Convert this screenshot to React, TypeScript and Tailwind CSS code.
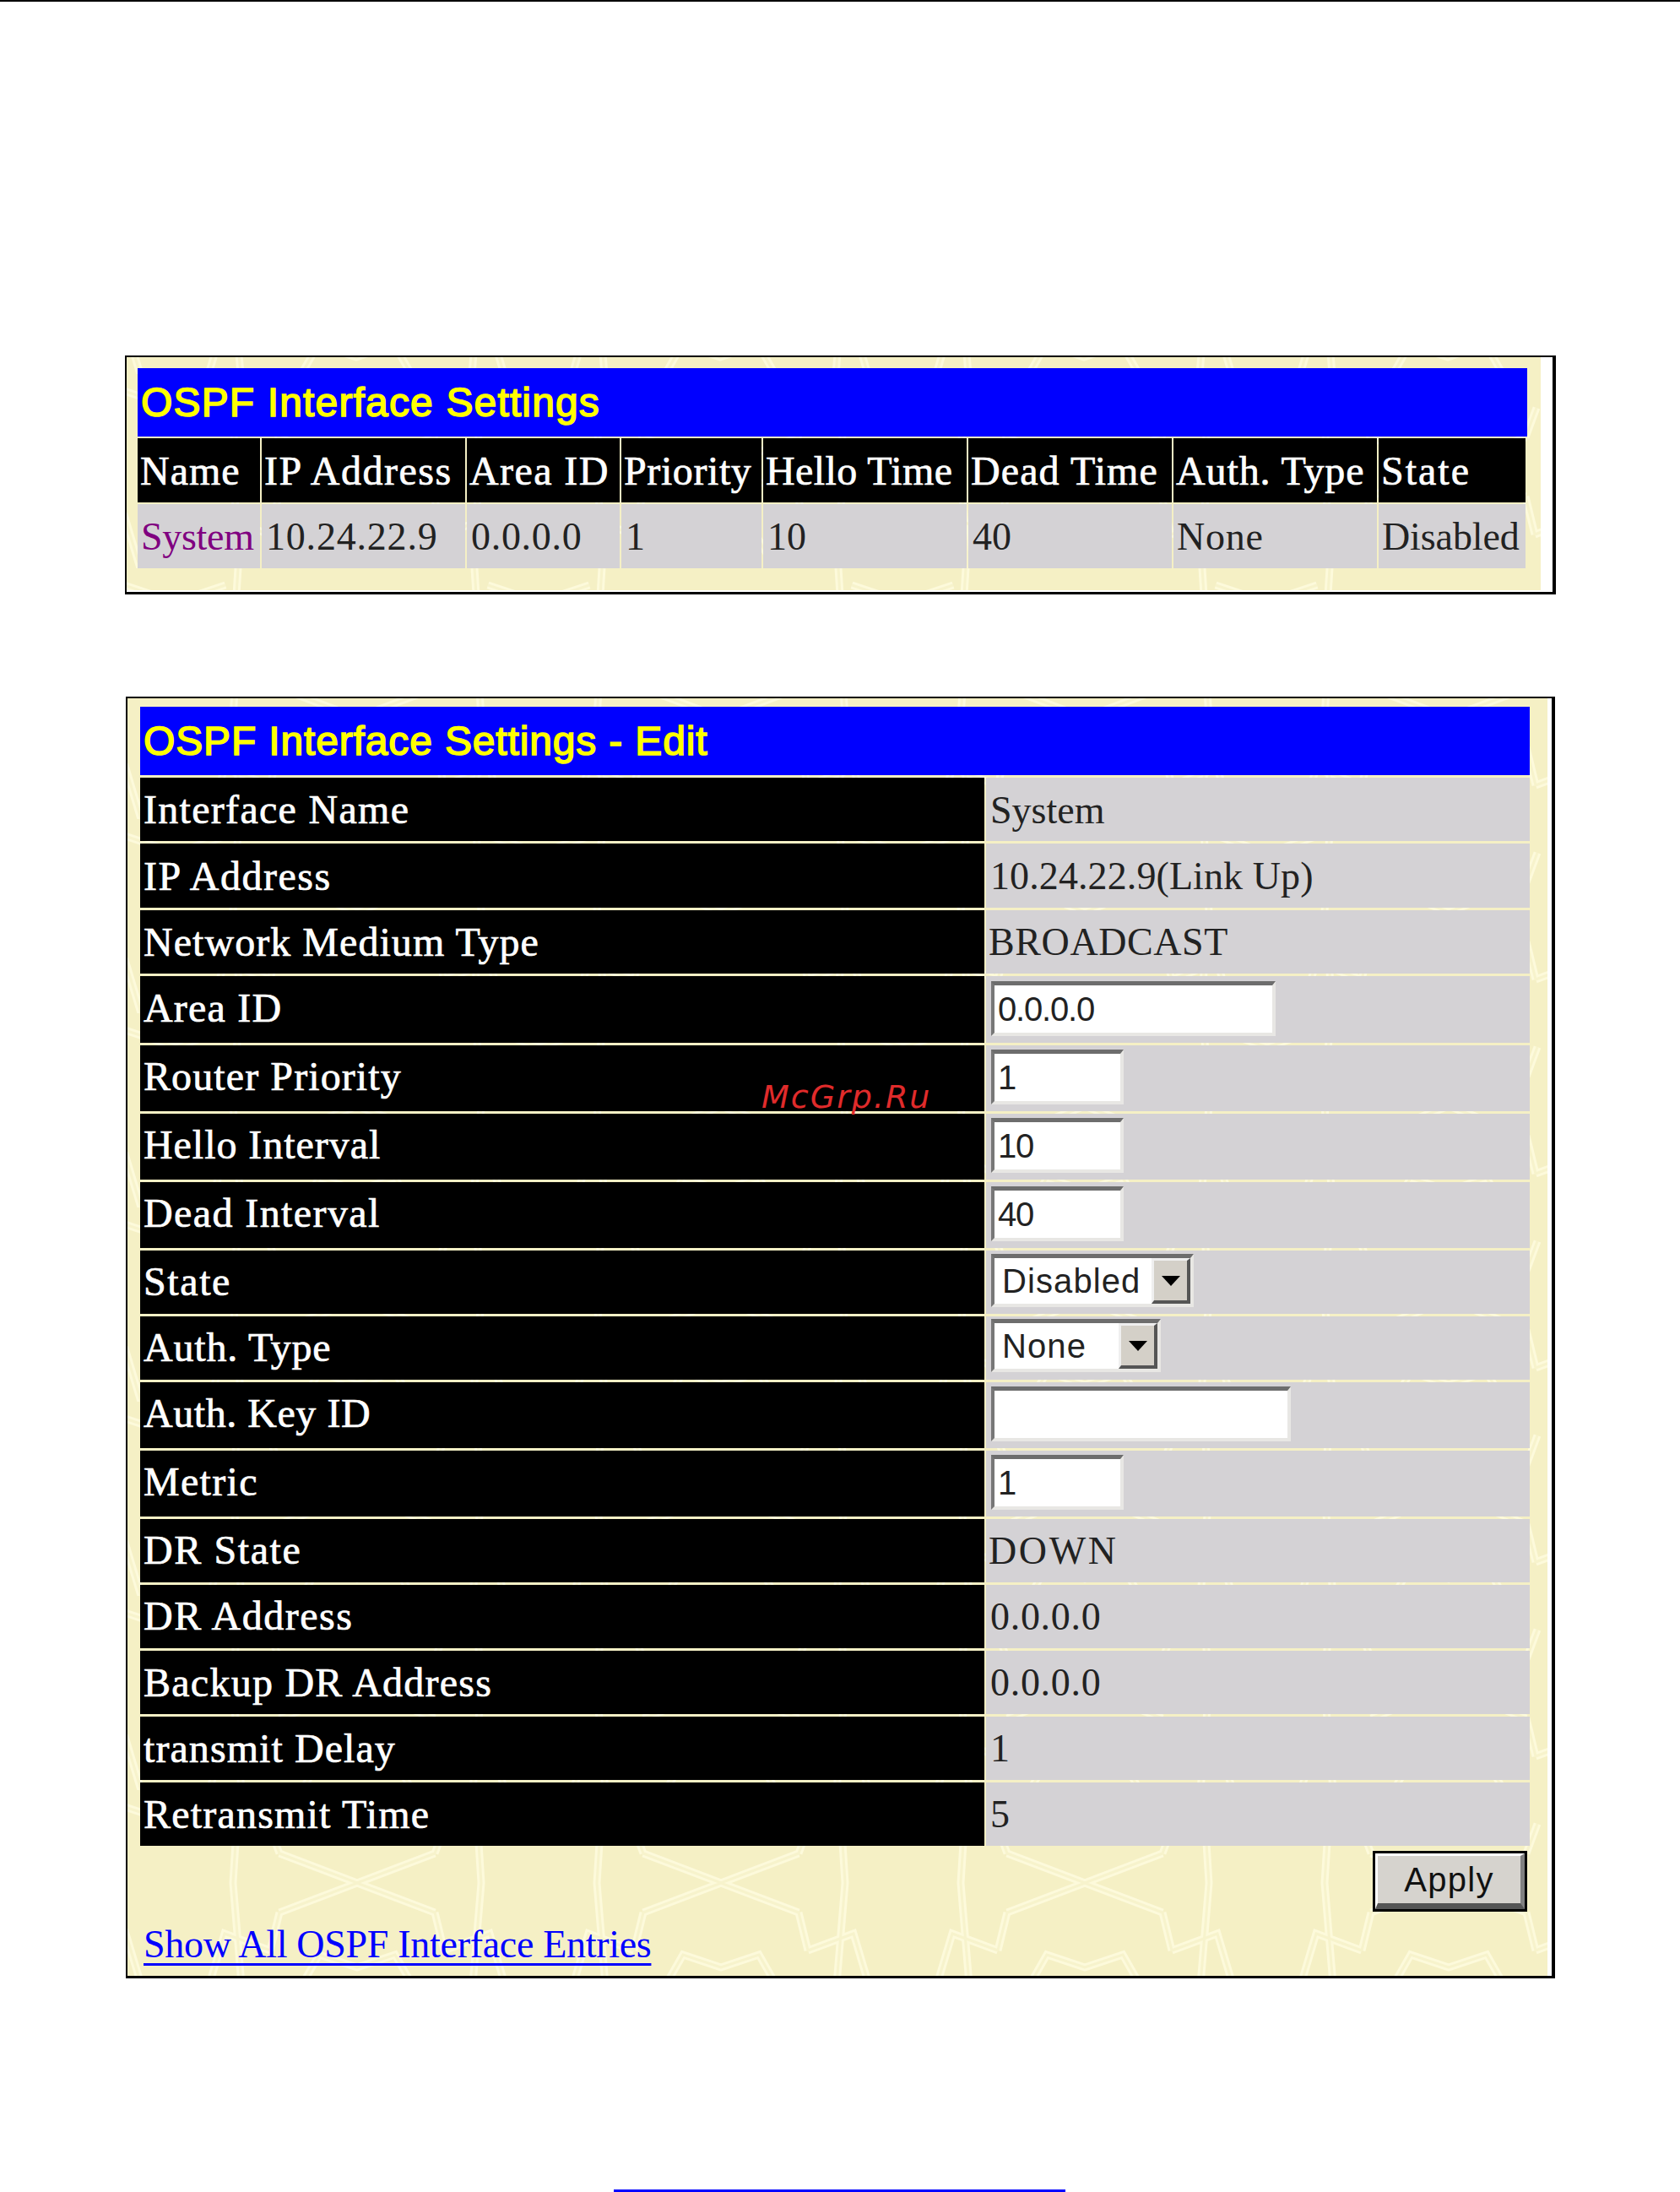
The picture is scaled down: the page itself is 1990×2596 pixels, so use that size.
import React from "react";

const serif = "font-['Liberation_Serif',serif]";
const stroke = "[-webkit-text-stroke:0.7px_#ffffff]";
const titleCls =
  "h-[81px] w-[1646px] bg-[#0000ff] flex items-center font-['Liberation_Sans',sans-serif] text-[48px] text-[#ffff00] [-webkit-text-stroke:1.6px_#ffff00]";

function PatternBg({ id, x, y }: { id: string; x: number; y: number }) {
  const d =
    "M123 75 L215 110 L307 75 M123 145 L215 110 L307 145 M123 75 L110 40 M307 75 L320 40 M123 145 L112 190 M307 145 L318 190 " +
    "M75 0 L68 110 L78 230 M355 0 L362 110 L352 230 " +
    "M40 230 L58 170 L112 190 M390 230 L372 170 L318 190 M150 230 L170 195 L215 210 L260 195 L280 230 M0 40 L60 20 M431 40 L371 20";
  return (
    <svg className="absolute inset-0 h-full w-full" aria-hidden="true">
      <defs>
        <pattern id={id} width="431" height="230" patternUnits="userSpaceOnUse" x={x} y={y}>
          <rect width="431" height="230" fill="#f5f0c5" />
          <path d={d} fill="none" stroke="#fdfadb" strokeWidth="9" />
          <path d={d} fill="none" stroke="#f7f3cc" strokeWidth="3" />
        </pattern>
      </defs>
      <rect width="100%" height="100%" fill={`url(#${id})`} />
    </svg>
  );
}

const headers = [
  { t: "Name", c: "tracking-[1px]" },
  { t: "IP Address", c: "tracking-[1.5px]" },
  { t: "Area ID", c: "tracking-[1.4px]" },
  { t: "Priority", c: "tracking-[0.6px]" },
  { t: "Hello Time", c: "tracking-[0.4px]" },
  { t: "Dead Time", c: "tracking-[1.1px]" },
  { t: "Auth. Type", c: "tracking-[0.9px]" },
  { t: "State", c: "tracking-[2px]" },
];
const values = [
  { t: "System", c: "pl-[4px] text-[#800080] tracking-[-0.3px]" },
  { t: "10.24.22.9", c: "pl-[5px] text-[#222222] tracking-[0.8px]" },
  { t: "0.0.0.0", c: "pl-[5px] text-[#222222] tracking-[0.7px]" },
  { t: "1", c: "pl-[5px] text-[#222222]" },
  { t: "10", c: "pl-[5px] text-[#222222]" },
  { t: "40", c: "pl-[5px] text-[#222222]" },
  { t: "None", c: "pl-[4px] text-[#222222] tracking-[0.8px]" },
  { t: "Disabled", c: "pl-[4px] text-[#222222] tracking-[-0.1px]" },
];

function SunkenInput({ value, width }: { value: string; width: string }) {
  return (
    <div
      className={`${width} mb-[3px] h-[65px] border-t-[5px] border-l-[4px] border-r-[4px] border-b-[4px] border-t-[#6d6d6d] border-l-[#777777] border-r-[#e8e7e4] border-b-[#e8e7e4] bg-white flex items-center pl-[4px] font-['Liberation_Sans',sans-serif] text-[40px] tracking-[-1.2px] leading-none text-[#222222]`}
    >
      {value}
    </div>
  );
}

function FakeSelect({ value, width, mb }: { value: string; width: string; mb: string }) {
  return (
    <div
      className={`${width} ${mb} h-[63px] border-t-[5px] border-l-[4px] border-r-[4px] border-b-[4px] border-t-[#6d6d6d] border-l-[#777777] border-r-[#e8e7e4] border-b-[#e8e7e4] bg-white flex items-stretch font-['Liberation_Sans',sans-serif] text-[40px] tracking-[1.1px] leading-none text-[#222222]`}
    >
      <div className="flex-1 flex items-center pl-[9px]">{value}</div>
      <div className="w-[46px] bg-[#d4d0c8] border-t-[3px] border-l-[3px] border-r-[4px] border-b-[4px] border-t-[#efefef] border-l-[#efefef] border-r-[#555555] border-b-[#555555] flex items-center justify-center">
        <svg width="22" height="12" viewBox="0 0 22 12" aria-hidden="true"><path d="M0 0H22L11 12Z" fill="#000" /></svg>
      </div>
    </div>
  );
}

type Row = { label: string; h: string; ls: string; pb: string; vc?: string; content: React.ReactNode };
const rows: Row[] = [
  { label: "Interface Name", h: "h-[75px]", ls: "tracking-[1.3px]", pb: "pt-[1px]", vc: "pl-[5px] pt-[1px]", content: "System" },
  { label: "IP Address", h: "h-[76px]", ls: "tracking-[1.5px]", pb: "pt-[1px]", vc: "pl-[5px] pt-[1px] tracking-[0.1px]", content: "10.24.22.9(Link Up)" },
  { label: "Network Medium Type", h: "h-[75px]", ls: "tracking-[1.05px]", pb: "pt-[1px]", vc: "pl-[3px] tracking-[0.6px]", content: "BROADCAST" },
  { label: "Area ID", h: "h-[79px]", ls: "tracking-[1.2px]", pb: "pb-[3px]", content: <SunkenInput value="0.0.0.0" width="w-[337px]" /> },
  { label: "Router Priority", h: "h-[78px]", ls: "tracking-[1.1px]", pb: "pb-[4px]", content: <SunkenInput value="1" width="w-[157px]" /> },
  { label: "Hello Interval", h: "h-[78px]", ls: "tracking-[0.95px]", pb: "pb-[4px]", content: <SunkenInput value="10" width="w-[157px]" /> },
  { label: "Dead Interval", h: "h-[78px]", ls: "tracking-[1.4px]", pb: "pb-[4px]", content: <SunkenInput value="40" width="w-[157px]" /> },
  { label: "State", h: "h-[75px]", ls: "tracking-[1.6px]", pb: "pb-[1px]", content: <FakeSelect value="Disabled" width="w-[240px]" mb="mb-[4px]" /> },
  { label: "Auth. Type", h: "h-[75px]", ls: "tracking-[0.8px]", pb: "pb-[1px]", content: <FakeSelect value="None" width="w-[201px]" mb="mb-[6px]" /> },
  { label: "Auth. Key ID", h: "h-[78px]", ls: "tracking-[0.55px]", pb: "pb-[4px]", content: <SunkenInput value="" width="w-[355px]" /> },
  { label: "Metric", h: "h-[78px]", ls: "tracking-[1.3px]", pb: "pb-[4px]", content: <SunkenInput value="1" width="w-[157px]" /> },
  { label: "DR State", h: "h-[75px]", ls: "tracking-[1.6px]", pb: "pb-[1px]", vc: "pl-[3px] tracking-[2.6px]", content: "DOWN" },
  { label: "DR Address", h: "h-[75px]", ls: "tracking-[1.5px]", pb: "pb-[1px]", vc: "pl-[5px] tracking-[0.7px]", content: "0.0.0.0" },
  { label: "Backup DR Address", h: "h-[75px]", ls: "tracking-[1.25px]", pb: "pt-[1px]", vc: "pl-[5px] tracking-[0.7px]", content: "0.0.0.0" },
  { label: "transmit Delay", h: "h-[75px]", ls: "tracking-[1.07px]", pb: "pt-[1px]", vc: "pl-[5px]", content: "1" },
  { label: "Retransmit Time", h: "h-[75px]", ls: "tracking-[1.2px]", pb: "pt-[1px]", vc: "pl-[5px]", content: "5" },
];

export default function App() {
  return (
    <div className={`relative w-[1990px] h-[2596px] bg-white overflow-hidden ${serif}`}>
      <div className="h-[2px] w-full bg-black" />
      <div className="pt-[419px] pl-[148px]">
        <section className="w-[1695px] h-[283px] border-l-2 border-t-2 border-r-4 border-b-[3px] border-black bg-white">
          <div className="relative w-[1675px] h-[276px] overflow-hidden">
            <PatternBg id="p1" x={57} y={20} />
            <div className="relative pl-[13px] pt-[13px]">
              <div className={`${titleCls} pl-[4px] tracking-[1.15px]`}>OSPF Interface Settings</div>
              <div className="mt-[2px] grid gap-x-[2px] gap-y-[2px] grid-cols-[145px_241px_181px_166px_241px_241px_241px_174px] grid-rows-[76px_76px] w-[1646px] text-[46px]">
                {headers.map((h) => (
                  <div key={h.t} className={`bg-black text-white text-[48px] flex items-center pl-[3px] pt-[2px] whitespace-nowrap ${stroke} ${h.c}`}>{h.t}</div>
                ))}
                {values.map((v) => (
                  <div key={v.t} className={`bg-[#d4d2d5] flex items-center whitespace-nowrap ${v.c}`}>{v.t}</div>
                ))}
              </div>
            </div>
          </div>
        </section>
      </div>

      <div className="pt-[121px] pl-[149px]">
        <section className="w-[1693px] h-[1518px] border-l-2 border-t-2 border-r-4 border-b-[3px] border-black bg-white">
          <div className="relative w-[1682px] h-[1513px] overflow-hidden">
            <PatternBg id="p2" x={57} y={143} />
            <div className="relative pl-[15px] pt-[10px]">
              <div className={`${titleCls} pl-[4px] tracking-[0.85px]`}>OSPF Interface Settings - Edit</div>
              <div className="mt-[3px] flex flex-col gap-[3px] w-[1646px] text-[46px]">
                {rows.map((r) => (
                  <div key={r.label} className={`flex gap-[2px] ${r.h}`}>
                    <div className={`w-[1000px] bg-black text-white text-[48px] flex items-center pl-[4px] whitespace-nowrap ${stroke} ${r.ls} ${r.pb}`}>{r.label}</div>
                    <div className={`flex-1 bg-[#d4d2d5] text-[#222222] flex items-center whitespace-nowrap ${r.vc ?? "pl-[6px]"}`}>{r.content}</div>
                  </div>
                ))}
              </div>
              <div className="flex justify-end w-[1643px] mt-[6px]">
                <button className="w-[183px] h-[72px] border-[3px] border-black bg-[#d6d3ce] font-['Liberation_Sans',sans-serif] text-[40px] tracking-[1.3px] text-[#111111]">
                  <div className="flex h-full w-full items-center justify-center border-t-[3px] border-l-[3px] border-r-[5px] border-b-[7px] border-t-white border-l-white border-r-[#808080] border-b-[#555555]">
                    Apply
                  </div>
                </button>
              </div>
              <div className="mt-[4px] pl-[4px]">
                <a className="text-[#0000ff] underline decoration-[3px] underline-offset-[7px] text-[46px] tracking-[-0.3px]" href="#">Show All OSPF Interface Entries</a>
              </div>
            </div>
          </div>
        </section>
      </div>

      <div className="absolute left-[902px] top-[1271px] font-['DejaVu_Sans',sans-serif] italic text-[38px] tracking-[2px] text-[#e02b2b]">McGrp.Ru</div>
      <div className="absolute left-[727px] top-[2593px] w-[535px] h-[3px] bg-[#0000ff]" />
    </div>
  );
}
